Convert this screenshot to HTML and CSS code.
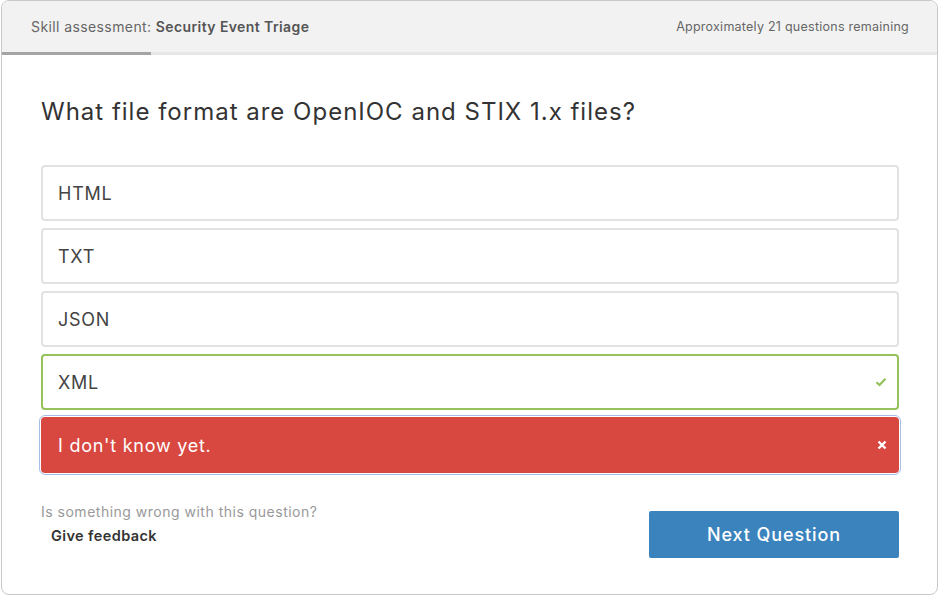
FILE: index.html
```html
<!DOCTYPE html>
<html lang="en">
<head>
    <meta charset="UTF-8">
    <title>Skill assessment</title>
    <link rel="stylesheet" href="styles.css">
</head>
<body>
    <div class="frame">
        <div class="header">
            <div class="title">Skill assessment: <b>Security Event Triage</b></div>
            <div class="remaining">Approximately 21 questions remaining</div>
            <div class="progress"></div>
        </div>
        <div class="content">
            <h1>What file format are OpenIOC and STIX 1.x files?</h1>
            <div class="options">
                <div class="option">HTML</div>
                <div class="option">TXT</div>
                <div class="option">JSON</div>
                <div class="option correct">XML
                    <svg class="mark" width="12" height="10" viewBox="0 0 12 10"><path d="M1.5 5.2 L4.5 8 L10.5 1.8" fill="none" stroke="#93c15a" stroke-width="2.2"/></svg>
                </div>
                <div class="option wrong">I don't know yet.
                    <svg class="mark" width="10" height="10" viewBox="0 0 10 10"><path d="M1.5 1.5 L8.5 8.5 M8.5 1.5 L1.5 8.5" fill="none" stroke="#fff" stroke-width="2.4"/></svg>
                </div>
            </div>
            <div class="footer">
                <div class="report">
                    <div class="question">Is something wrong with this question?</div>
                    <a class="feedback">Give feedback</a>
                </div>
                <button>Next Question</button>
            </div>
        </div>
    </div>
</body>
</html>
```
FILE: styles.css
```css
html, body {
    margin: 0;
    padding: 0;
    background: #fff;
}
body {
    font-family: "Inter", "Noto Sans", sans-serif;
    color: #3a3a3a;
}
.frame {
    width: 935px;
    height: 593px;
    margin-left: 1px;
    border: 1px solid #c8c8c8;
    border-radius: 8px;
    overflow: hidden;
}
.header {
    position: relative;
    height: 51px;
    background: #f2f2f2;
    border-bottom: 3px solid #e6e6e6;
    display: flex;
    justify-content: space-between;
    align-items: center;
    padding: 0 28px 0 29px;
}
.title {
    font-size: 14px;
    letter-spacing: 0.4px;
    color: #666;
}
.title b {
    font-weight: 600;
    color: #555;
}
.remaining {
    font-size: 12.5px;
    letter-spacing: 0.25px;
    color: #666;
}
.progress {
    position: absolute;
    left: 0;
    bottom: -3px;
    width: 149px;
    height: 3px;
    background: #a4a4a4;
}
.content {
    padding: 0 38px 0 39px;
}
h1 {
    margin: 42px 0 38px;
    font-size: 24px;
    line-height: 30px;
    letter-spacing: 1px;
    font-weight: 400;
    color: #333;
}
.options {
    display: flex;
    flex-direction: column;
    gap: 7px;
}
.option {
    height: 52px;
    border: 2px solid #e2e2e2;
    border-radius: 4px;
    padding: 0 10px 0 15px;
    display: flex;
    align-items: center;
    justify-content: space-between;
    font-size: 18px;
    letter-spacing: 0.75px;
    color: #444;
}
.option.correct {
    border-color: #95c25a;
}
.option.wrong {
    background: #d84840;
    border-color: #d84840;
    color: #fff;
    outline: 1px solid #a7bde9;
    outline-offset: 1px;
}
.footer {
    display: flex;
    justify-content: space-between;
    margin-top: 29px;
}
.question {
    font-size: 14px;
    letter-spacing: 0.5px;
    color: #999;
    line-height: 20px;
}
.feedback {
    display: block;
    margin: 5px 0 0 10px;
    font-size: 14.5px;
    letter-spacing: 0.4px;
    font-weight: 600;
    color: #333;
}
button {
    width: 250px;
    height: 47px;
    margin-top: 9px;
    border: none;
    border-radius: 2px;
    background: #3b83bd;
    color: #fff;
    font-family: inherit;
    font-size: 18px;
    letter-spacing: 0.9px;
    font-weight: 500;
}
```
